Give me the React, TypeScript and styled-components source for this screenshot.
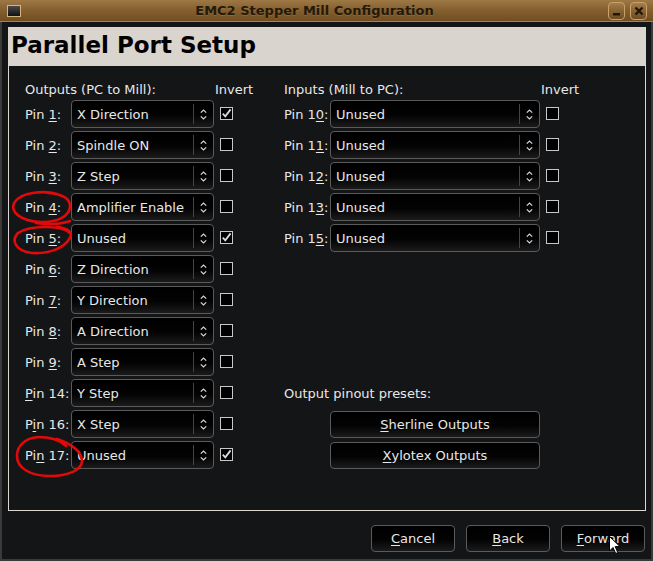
import React from 'react';
import styled, { createGlobalStyle } from 'styled-components';

const Global = createGlobalStyle`
  html, body { margin: 0; padding: 0; background: #141517; }
  body { width: 653px; height: 561px; overflow: hidden; font-family: "DejaVu Sans", "Liberation Sans", sans-serif; }
`;

const Window = styled.div`
  position: relative;
  width: 653px;
  height: 561px;
  display: flex;
  flex-direction: column;
  background: #141517;
  color: #e8e8e8;
  font-size: 13px;
`;

const TitleBar = styled.div`
  flex: none;
  height: 22px;
  box-sizing: border-box;
  display: flex;
  align-items: center;
  padding: 0 6px 0 7px;
  background: linear-gradient(#9d7946 0%, #86612f 45%, #714d22 100%);
  border-bottom: 1px solid #a9824c;
`;

const MenuIcon = styled.div`
  width: 14px;
  height: 12px;
  box-sizing: border-box;
  border: 1px solid #d6b47f;
  background: linear-gradient(#4a4a4a, #111);
`;

const Title = styled.div`
  flex: 1;
  text-align: center;
  font-weight: bold;
  font-size: 13px;
  color: #24190b;
  text-shadow: 0 1px 0 rgba(200, 160, 100, 0.25);
`;

const Controls = styled.div`
  display: flex;
  gap: 5px;
`;

const CtlButton = styled.div`
  width: 17px;
  height: 18px;
  box-sizing: border-box;
  border: 1px solid #c9a06a;
  border-radius: 4px;
  background: linear-gradient(rgba(255, 220, 160, 0.12), rgba(0, 0, 0, 0.05));
  display: flex;
  align-items: center;
  justify-content: center;
`;

const Body = styled.div`
  flex: 1;
  display: flex;
  flex-direction: column;
  border-left: 2px solid #3a3a3b;
  border-right: 2px solid #3a3a3b;
  border-bottom: 2px solid #3a3a3b;
  padding: 5px 5px 0 6px;
`;

const Panel = styled.div`
  height: 484px;
  box-sizing: border-box;
  border: 1px solid #dcd6d1;
  display: flex;
  flex-direction: column;
`;

const Header = styled.div`
  height: 38px;
  box-sizing: border-box;
  background: #dad4cf;
  color: #000;
  font-weight: bold;
  font-size: 23px;
  line-height: 35px;
  padding-left: 2px;
`;

const Content = styled.div`
  flex: 1;
  display: grid;
  grid-template-columns: 259px 1fr;
  align-items: start;
  padding: 16px 0 0 16px;
`;

const Block = styled.div<{ $combo: number }>`
  display: grid;
  grid-template-columns: 45px ${(p) => p.$combo}px 1fr;
  grid-template-rows: 15px repeat(12, 28px);
  column-gap: 1px;
  row-gap: 3px;
  align-items: center;
  white-space: nowrap;
`;

const Heading = styled.div<{ $row?: number; $span?: number }>`
  line-height: 15px;
  grid-column: span ${(p) => p.$span ?? 2};
  ${(p) => (p.$row ? `grid-row: ${p.$row};` : '')}
`;

const InvertHead = styled.div`
  line-height: 15px;
  grid-column: 3;
`;

const PinLabel = styled.div<{ $row?: number }>`
  grid-column: 1;
  ${(p) => (p.$row ? `grid-row: ${p.$row};` : '')}
`;

const U = styled.span`
  text-decoration: underline;
  text-underline-offset: 2px;
  text-decoration-thickness: 1px;
`;

const Combo = styled.div`
  height: 28px;
  box-sizing: border-box;
  display: flex;
  align-items: center;
  border: 1px solid #5a5a5b;
  border-radius: 4px;
  background: linear-gradient(#000 0%, #030303 55%, #1b1b1c 100%);
  padding-left: 5px;
`;

const ComboText = styled.span`
  flex: 1;
  overflow: hidden;
`;

const Sep = styled.span`
  width: 1px;
  height: 20px;
  background: #444445;
`;

const Arrows = styled.span`
  width: 19px;
  display: flex;
  justify-content: center;
  align-items: center;
`;

const CheckCell = styled.div`
  grid-column: 3;
  display: flex;
  align-items: center;
`;

const Check = styled.span`
  width: 13px;
  height: 13px;
  margin-left: 5px;
  margin-top: -2px;
  box-sizing: border-box;
  border: 1px solid #c8c8c8;
  background: #000;
  display: flex;
  align-items: center;
  justify-content: center;
`;

const PushButton = styled.div<{ $row?: number }>`
  height: 27px;
  box-sizing: border-box;
  display: flex;
  align-items: center;
  justify-content: center;
  border: 1px solid #5a5a5b;
  border-radius: 4px;
  background: linear-gradient(#000 0%, #030303 55%, #1b1b1c 100%);
  color: #e8e8e8;
  ${(p) => (p.$row ? `grid-row: ${p.$row}; grid-column: 2; align-self: end;` : '')}
`;

const Footer = styled.div`
  display: flex;
  justify-content: flex-end;
  gap: 11px;
  margin-top: 14px;
  padding-right: 1px;
`;

const FooterButton = styled(PushButton)`
  width: 84px;
`;

const Overlay = styled.svg`
  position: absolute;
  left: 0;
  top: 0;
  width: 653px;
  height: 561px;
  pointer-events: none;
`;

const mn = (text: string, idx: number) => (
  <>
    {text.slice(0, idx)}
    <U>{text[idx]}</U>
    {text.slice(idx + 1)}
  </>
);

type Pin = { label: string; u: number; value: string; checked: boolean };

const outputs: Pin[] = [
  { label: 'Pin 1:', u: 4, value: 'X Direction', checked: true },
  { label: 'Pin 2:', u: 4, value: 'Spindle ON', checked: false },
  { label: 'Pin 3:', u: 4, value: 'Z Step', checked: false },
  { label: 'Pin 4:', u: 4, value: 'Amplifier Enable', checked: false },
  { label: 'Pin 5:', u: 4, value: 'Unused', checked: true },
  { label: 'Pin 6:', u: 4, value: 'Z Direction', checked: false },
  { label: 'Pin 7:', u: 4, value: 'Y Direction', checked: false },
  { label: 'Pin 8:', u: 4, value: 'A Direction', checked: false },
  { label: 'Pin 9:', u: 4, value: 'A Step', checked: false },
  { label: 'Pin 14:', u: 0, value: 'Y Step', checked: false },
  { label: 'Pin 16:', u: 1, value: 'X Step', checked: false },
  { label: 'Pin 17:', u: 2, value: 'Unused', checked: true },
];

const inputs: Pin[] = [
  { label: 'Pin 10:', u: 5, value: 'Unused', checked: false },
  { label: 'Pin 11:', u: 5, value: 'Unused', checked: false },
  { label: 'Pin 12:', u: 5, value: 'Unused', checked: false },
  { label: 'Pin 13:', u: 5, value: 'Unused', checked: false },
  { label: 'Pin 15:', u: 5, value: 'Unused', checked: false },
];

const ArrowIcon = () => (
  <svg width="7" height="11" viewBox="0 0 7 11">
    <path d="M0.8 3.6 L3.5 1 L6.2 3.6 M0.8 7.4 L3.5 10 L6.2 7.4" fill="none" stroke="#d8d8d8" strokeWidth="1.2" />
  </svg>
);

const CheckMark = () => (
  <svg width="11" height="11" viewBox="0 0 11 11">
    <path d="M1.8 5.6 L4.3 8.3 L9.6 1.4" fill="none" stroke="#dcdcdc" strokeWidth="1.8" />
  </svg>
);

const PinRow = ({ pin }: { pin: Pin }) => (
  <>
    <PinLabel>{mn(pin.label, pin.u)}</PinLabel>
    <Combo>
      <ComboText>{pin.value}</ComboText>
      <Sep />
      <Arrows>
        <ArrowIcon />
      </Arrows>
    </Combo>
    <CheckCell>
      <Check>{pin.checked && <CheckMark />}</Check>
    </CheckCell>
  </>
);

export default function App() {
  return (
    <>
      <Global />
      <Window>
        <TitleBar>
          <MenuIcon />
          <Title>EMC2 Stepper Mill Configuration</Title>
          <Controls>
            <CtlButton>
              <svg width="9" height="12" viewBox="0 0 9 12">
                <rect x="1" y="8" width="7" height="2.5" fill="#21160a" />
              </svg>
            </CtlButton>
            <CtlButton>
              <svg width="10" height="10" viewBox="0 0 10 10">
                <path d="M1.5 1.5 L8.5 8.5 M8.5 1.5 L1.5 8.5" stroke="#21160a" strokeWidth="2.4" />
              </svg>
            </CtlButton>
          </Controls>
        </TitleBar>
        <Body>
          <Panel>
            <Header>Parallel Port Setup</Header>
            <Content>
              <Block $combo={143}>
                <Heading>Outputs (PC to Mill):</Heading>
                <InvertHead>Invert</InvertHead>
                {outputs.map((p) => (
                  <PinRow key={p.label} pin={p} />
                ))}
              </Block>
              <Block $combo={210}>
                <Heading>Inputs (Mill to PC):</Heading>
                <InvertHead>Invert</InvertHead>
                {inputs.map((p) => (
                  <PinRow key={p.label} pin={p} />
                ))}
                <Heading $row={11} $span={3}>
                  Output pinout presets:
                </Heading>
                <PushButton $row={12}>{mn('Sherline Outputs', 0)}</PushButton>
                <PushButton $row={13}>{mn('Xylotex Outputs', 0)}</PushButton>
              </Block>
            </Content>
          </Panel>
          <Footer>
            <FooterButton>{mn('Cancel', 0)}</FooterButton>
            <FooterButton>{mn('Back', 0)}</FooterButton>
            <FooterButton>{mn('Forward', 0)}</FooterButton>
          </Footer>
        </Body>
        <Overlay viewBox="0 0 653 561">
          <g fill="none" stroke="#e10a0a" strokeWidth="2.6" strokeLinecap="round">
            <path d="M62 196 C46 189, 20 192, 14 203 C10 213, 22 221, 40 222 C57 223, 70 216, 70 206 C70 198, 62 194, 48 193" />
            <path d="M36 223 C48 225, 62 224, 70 221" />
            <path d="M70 233 C62 225, 30 225, 18 233 C11 240, 15 251, 32 253 C50 254, 64 248, 70 238 C73 232, 68 228, 57 227" />
            <path d="M66 446 C60 440, 50 437, 38 437 C25 438, 17 446, 17 456 C17 468, 30 476, 50 476 C68 476, 82 470, 82 461 C82 452, 72 444, 57 439" />
          </g>
          <path
            d="M609.5 536.5 L609.5 551 L613 547.5 L615.7 553.5 L617.8 552.6 L615.2 546.6 L620 546.6 Z"
            fill="#fff"
            stroke="#000"
            strokeWidth="1"
            strokeLinejoin="round"
          />
        </Overlay>
      </Window>
    </>
  );
}
